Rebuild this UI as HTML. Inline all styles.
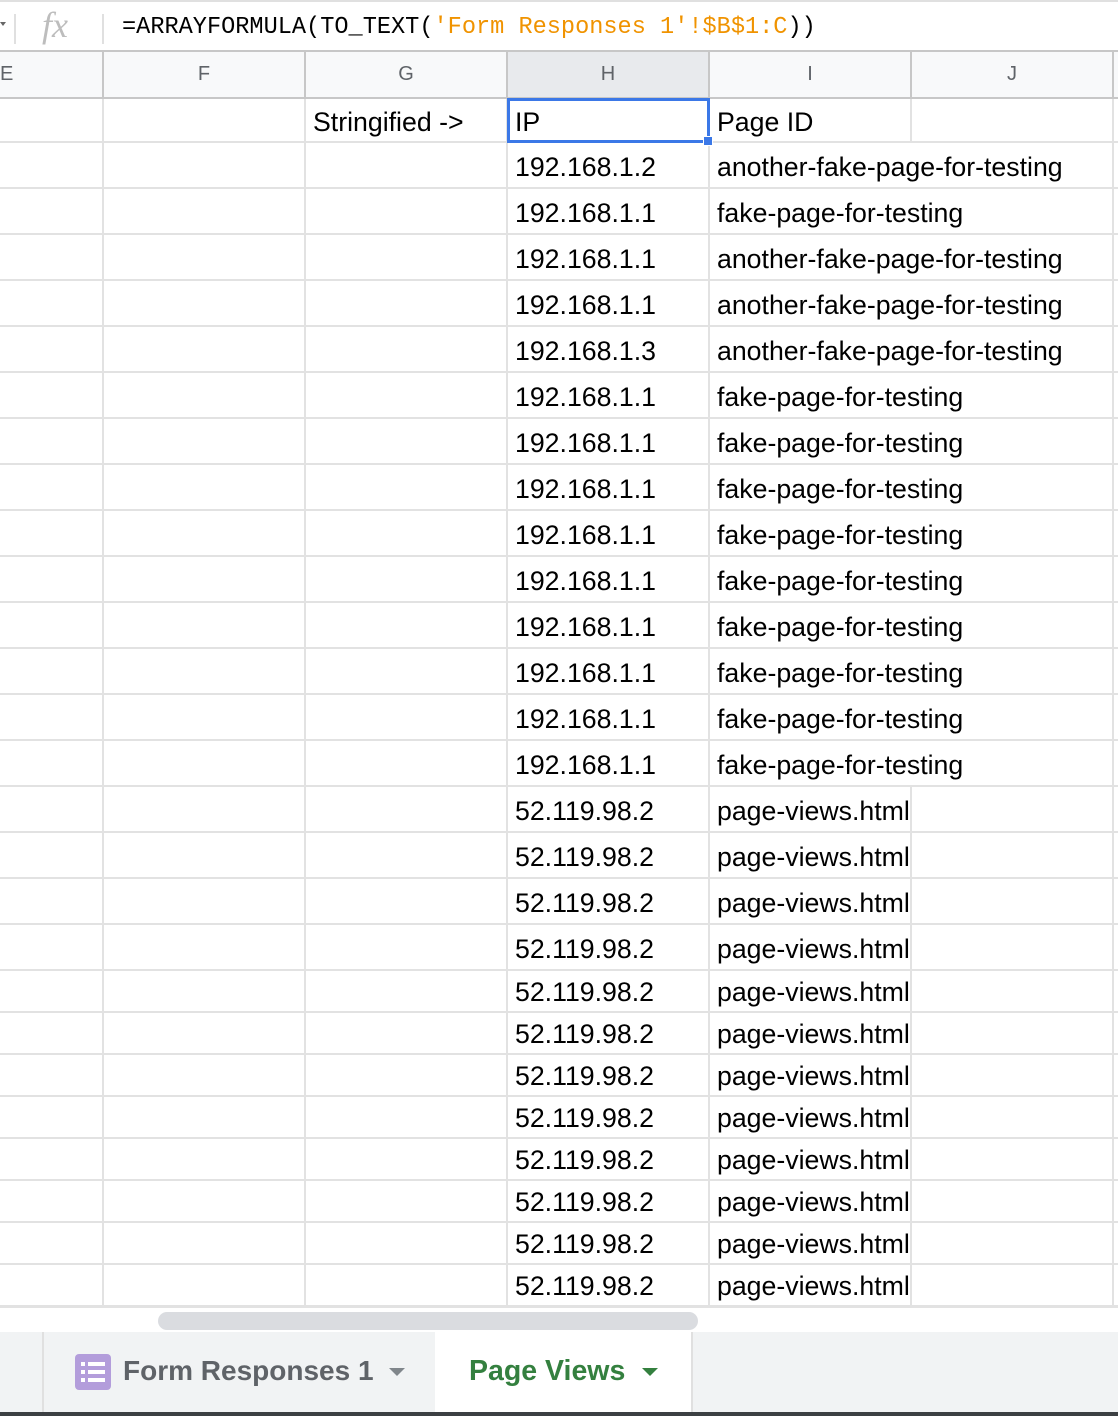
<!DOCTYPE html>
<html><head><meta charset="utf-8"><style>
*{box-sizing:border-box;margin:0;padding:0}
body{width:1118px;height:1416px;overflow:hidden;background:#fff;font-family:"Liberation Sans",Arial,sans-serif;position:relative}
.fb{position:absolute;left:0;top:0;width:1118px;height:52px;border-bottom:2px solid #c7c7c7;border-top:2px solid #e0e0e0}
.fx{position:absolute;left:42px;top:2px;font-family:"Liberation Serif",serif;font-style:italic;font-size:36px;color:#bdbdbd}
.fdiv{position:absolute;left:102px;top:12px;width:2px;height:30px;background:#e0e0e0}
.ftxt{position:absolute;left:122px;top:12px;font-family:"Liberation Mono",monospace;font-size:23.6px;color:#000;letter-spacing:0}
.or{color:#f09300}
.hdr{position:absolute;left:0;top:52px;height:47px;width:1118px;background:#f8f9fa;border-bottom:2px solid #c7c7c7;display:flex}
.hc{height:100%;border-right:2px solid #c7c7c7;text-align:center;line-height:44px;font-size:20px;color:#5f6368;flex:none}
.grid{position:absolute;left:0;top:99px;width:1118px}
.row{display:flex;border-bottom:2px solid #e2e2e2;width:1118px}
.c{flex:none;border-right:2px solid #e2e2e2;height:100%;font-size:26.7px;color:#000;padding-left:7px;padding-top:2px;white-space:nowrap;overflow:visible;position:relative}
.e{width:104px}.w{width:202px}
.nb{border-right:none}
.sel{position:absolute;left:507px;top:98px;width:203px;height:45px;border:3px solid #3b78e7}
.hd{position:absolute;left:703px;top:136px;width:10px;height:10px;background:#3b78e7;border:1px solid #fff}
.sb{position:absolute;left:0;top:1306px;width:1118px;height:26px;background:#fff;border-top:2px solid #e2e2e2}
.thumb{position:absolute;left:158px;top:1312px;width:540px;height:18px;border-radius:9px;background:#dadce0}
.tabs{position:absolute;left:0;top:1332px;width:1118px;height:80px;background:#f1f3f4}
.t1{position:absolute;left:42px;top:0;width:393px;height:80px;border-left:2px solid #e0e0e0}
.t2{position:absolute;left:435px;top:0;width:258px;height:80px;background:#fff;border-right:2px solid #e0e0e0}
.bot{position:absolute;left:0;top:1412px;width:1118px;height:4px;background:#3c4043}
</style></head><body>
<div class="fb">
<div style="position:absolute;left:0;top:20px;height:4px;border-top:4px solid #666;border-left:3px solid transparent;border-right:3px solid transparent;width:0"></div>
<div style="position:absolute;left:14px;top:12px;width:2px;height:30px;background:#e0e0e0"></div>
<div class="fx">fx</div><div class="fdiv"></div>
<div class="ftxt">=ARRAYFORMULA(TO_TEXT(<span class="or">'Form Responses 1'!$B$1:C</span>))</div>
</div>
<div class="hdr">
<div class="hc e" style="text-align:left;padding-left:0">E</div>
<div class="hc w">F</div><div class="hc w">G</div>
<div class="hc w" style="background:#e8eaed">H</div>
<div class="hc w">I</div><div class="hc w">J</div>
</div>
<div class="grid">
<div class="row" style="height:44px;line-height:42px"><div class="c e"></div><div class="c w"></div><div class="c w">Stringified -&gt;</div><div class="c w">IP</div><div class="c w">Page ID</div><div class="c w"></div></div>
<div class="row" style="height:46px;line-height:44px"><div class="c e"></div><div class="c w"></div><div class="c w"></div><div class="c w">192.168.1.2</div><div class="c w nb">another-fake-page-for-testing</div><div class="c w"></div></div>
<div class="row" style="height:46px;line-height:44px"><div class="c e"></div><div class="c w"></div><div class="c w"></div><div class="c w">192.168.1.1</div><div class="c w nb">fake-page-for-testing</div><div class="c w"></div></div>
<div class="row" style="height:46px;line-height:44px"><div class="c e"></div><div class="c w"></div><div class="c w"></div><div class="c w">192.168.1.1</div><div class="c w nb">another-fake-page-for-testing</div><div class="c w"></div></div>
<div class="row" style="height:46px;line-height:44px"><div class="c e"></div><div class="c w"></div><div class="c w"></div><div class="c w">192.168.1.1</div><div class="c w nb">another-fake-page-for-testing</div><div class="c w"></div></div>
<div class="row" style="height:46px;line-height:44px"><div class="c e"></div><div class="c w"></div><div class="c w"></div><div class="c w">192.168.1.3</div><div class="c w nb">another-fake-page-for-testing</div><div class="c w"></div></div>
<div class="row" style="height:46px;line-height:44px"><div class="c e"></div><div class="c w"></div><div class="c w"></div><div class="c w">192.168.1.1</div><div class="c w nb">fake-page-for-testing</div><div class="c w"></div></div>
<div class="row" style="height:46px;line-height:44px"><div class="c e"></div><div class="c w"></div><div class="c w"></div><div class="c w">192.168.1.1</div><div class="c w nb">fake-page-for-testing</div><div class="c w"></div></div>
<div class="row" style="height:46px;line-height:44px"><div class="c e"></div><div class="c w"></div><div class="c w"></div><div class="c w">192.168.1.1</div><div class="c w nb">fake-page-for-testing</div><div class="c w"></div></div>
<div class="row" style="height:46px;line-height:44px"><div class="c e"></div><div class="c w"></div><div class="c w"></div><div class="c w">192.168.1.1</div><div class="c w nb">fake-page-for-testing</div><div class="c w"></div></div>
<div class="row" style="height:46px;line-height:44px"><div class="c e"></div><div class="c w"></div><div class="c w"></div><div class="c w">192.168.1.1</div><div class="c w nb">fake-page-for-testing</div><div class="c w"></div></div>
<div class="row" style="height:46px;line-height:44px"><div class="c e"></div><div class="c w"></div><div class="c w"></div><div class="c w">192.168.1.1</div><div class="c w nb">fake-page-for-testing</div><div class="c w"></div></div>
<div class="row" style="height:46px;line-height:44px"><div class="c e"></div><div class="c w"></div><div class="c w"></div><div class="c w">192.168.1.1</div><div class="c w nb">fake-page-for-testing</div><div class="c w"></div></div>
<div class="row" style="height:46px;line-height:44px"><div class="c e"></div><div class="c w"></div><div class="c w"></div><div class="c w">192.168.1.1</div><div class="c w nb">fake-page-for-testing</div><div class="c w"></div></div>
<div class="row" style="height:46px;line-height:44px"><div class="c e"></div><div class="c w"></div><div class="c w"></div><div class="c w">192.168.1.1</div><div class="c w nb">fake-page-for-testing</div><div class="c w"></div></div>
<div class="row" style="height:46px;line-height:44px"><div class="c e"></div><div class="c w"></div><div class="c w"></div><div class="c w">52.119.98.2</div><div class="c w">page-views.html</div><div class="c w"></div></div>
<div class="row" style="height:46px;line-height:44px"><div class="c e"></div><div class="c w"></div><div class="c w"></div><div class="c w">52.119.98.2</div><div class="c w">page-views.html</div><div class="c w"></div></div>
<div class="row" style="height:46px;line-height:44px"><div class="c e"></div><div class="c w"></div><div class="c w"></div><div class="c w">52.119.98.2</div><div class="c w">page-views.html</div><div class="c w"></div></div>
<div class="row" style="height:46px;line-height:44px"><div class="c e"></div><div class="c w"></div><div class="c w"></div><div class="c w">52.119.98.2</div><div class="c w">page-views.html</div><div class="c w"></div></div>
<div class="row" style="height:42px;line-height:38px"><div class="c e"></div><div class="c w"></div><div class="c w"></div><div class="c w">52.119.98.2</div><div class="c w">page-views.html</div><div class="c w"></div></div>
<div class="row" style="height:42px;line-height:38px"><div class="c e"></div><div class="c w"></div><div class="c w"></div><div class="c w">52.119.98.2</div><div class="c w">page-views.html</div><div class="c w"></div></div>
<div class="row" style="height:42px;line-height:38px"><div class="c e"></div><div class="c w"></div><div class="c w"></div><div class="c w">52.119.98.2</div><div class="c w">page-views.html</div><div class="c w"></div></div>
<div class="row" style="height:42px;line-height:38px"><div class="c e"></div><div class="c w"></div><div class="c w"></div><div class="c w">52.119.98.2</div><div class="c w">page-views.html</div><div class="c w"></div></div>
<div class="row" style="height:42px;line-height:38px"><div class="c e"></div><div class="c w"></div><div class="c w"></div><div class="c w">52.119.98.2</div><div class="c w">page-views.html</div><div class="c w"></div></div>
<div class="row" style="height:42px;line-height:38px"><div class="c e"></div><div class="c w"></div><div class="c w"></div><div class="c w">52.119.98.2</div><div class="c w">page-views.html</div><div class="c w"></div></div>
<div class="row" style="height:42px;line-height:38px"><div class="c e"></div><div class="c w"></div><div class="c w"></div><div class="c w">52.119.98.2</div><div class="c w">page-views.html</div><div class="c w"></div></div>
<div class="row" style="height:42px;line-height:38px"><div class="c e"></div><div class="c w"></div><div class="c w"></div><div class="c w">52.119.98.2</div><div class="c w">page-views.html</div><div class="c w"></div></div>
</div>
<div class="sel"></div><div class="hd"></div>
<div class="sb"></div><div class="thumb"></div>
<div class="tabs">
<div class="t1">
<svg style="position:absolute;left:31px;top:22px" width="36" height="36" viewBox="0 0 36 36"><rect width="36" height="36" rx="4" fill="#b39ddb"/><g fill="#fff"><rect x="6" y="8" width="4" height="4"/><rect x="13" y="8" width="17" height="4"/><rect x="6" y="16" width="4" height="4"/><rect x="13" y="16" width="17" height="4"/><rect x="6" y="24" width="4" height="4"/><rect x="13" y="24" width="17" height="4"/></g></svg>
<div style="position:absolute;left:79px;top:23px;font-size:28px;color:#5f6368;font-weight:bold">Form Responses 1</div>
<div style="position:absolute;left:345px;top:36px;width:0;height:0;border-left:8px solid transparent;border-right:8px solid transparent;border-top:8px solid #80868b"></div>
</div>
<div class="t2">
<div style="position:absolute;left:34px;top:23px;font-size:28.5px;color:#34803f;font-weight:bold">Page Views</div>
<div style="position:absolute;left:207px;top:36px;width:0;height:0;border-left:8px solid transparent;border-right:8px solid transparent;border-top:8px solid #34803f"></div>
</div>
</div>
<div class="bot"></div>
</body></html>
